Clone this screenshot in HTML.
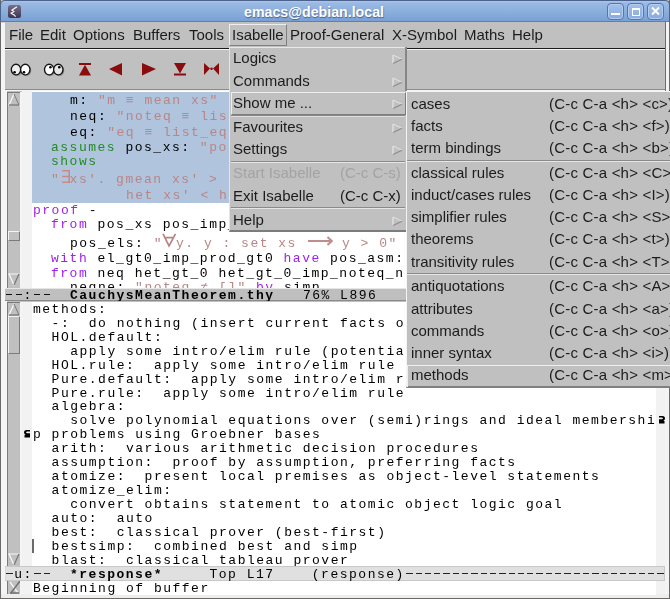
<!DOCTYPE html><html><head><meta charset="utf-8"><style>
html,body{margin:0;padding:0;width:670px;height:599px;overflow:hidden;background:#c0c0c0}
div{position:absolute;box-sizing:border-box}
.m{will-change:transform;font-family:"Liberation Mono",monospace;font-size:13px;line-height:14px;letter-spacing:1.5px;white-space:pre;color:#000}
.s{will-change:transform;font-family:"Liberation Sans",sans-serif;font-size:15px;line-height:22px;white-space:pre;color:#000}
</style></head><body>
<div style="left:0px;top:0px;width:670px;height:599px;background:#c0c0c0;"></div>
<div style="left:0px;top:0px;width:1px;height:599px;background:#6a6a6a;"></div>
<div style="left:669px;top:0px;width:1px;height:599px;background:#6a6a6a;"></div>
<div style="left:0px;top:598px;width:670px;height:1px;background:#6c6864;"></div>
<div style="left:1px;top:22px;width:4px;height:575px;background:#f4f4f4;"></div>
<div style="left:1px;top:22px;width:668px;height:1px;background:#d6d3cf;"></div>
<div style="left:665px;top:22px;width:4px;height:575px;background:#f4f4f4;"></div>
<div style="left:1px;top:594px;width:668px;height:4px;background:#ededed;"></div>
<div style="left:0;top:0;width:670px;height:22px;background:linear-gradient(#abc7ed 0px,#9bb9e4 2px,#8aaedc 11px,#7aa0d5 20px);border:1px solid #4b628a;border-bottom:1px solid #5880bb;border-radius:5px 5px 0 0"></div>
<div style="left:7.5px;top:5px;width:13px;height:12.5px;border-radius:2.5px;background:linear-gradient(#7a6f8c,#3d3450)"></div>
<svg style="position:absolute;left:7px;top:5px" width="13" height="13"><polyline points="9.6,2 4.8,5.2 7,6.6 4,8.3 7.6,10.2 8.2,11.3" fill="none" stroke="#fff" stroke-width="1.15" stroke-linejoin="round" stroke-linecap="round"/></svg>
<div style="left:236px;top:1.5px;width:160px;height:20px;font-family:'Liberation Sans';font-weight:bold;font-size:14.2px;line-height:20px;color:#fff;text-align:left;white-space:pre;padding-left:8px;text-shadow:0.5px 0.5px 1px rgba(30,50,90,0.6)">emacs@debian.local</div>
<div style="left:607px;top:3px;width:17px;height:17px;border-radius:4px;border:1px solid #4f76b2;background:linear-gradient(#a3c0ea,#88abdd);box-shadow:inset 0 0 0 1px #b3cdf0"></div>
<div style="left:627px;top:3px;width:17px;height:17px;border-radius:4px;border:1px solid #4f76b2;background:linear-gradient(#a3c0ea,#88abdd);box-shadow:inset 0 0 0 1px #b3cdf0"></div>
<div style="left:647px;top:3px;width:17px;height:17px;border-radius:4px;border:1px solid #4f76b2;background:linear-gradient(#a3c0ea,#88abdd);box-shadow:inset 0 0 0 1px #b3cdf0"></div>
<div style="left:611px;top:13px;width:9px;height:2px;background:#fff"></div>
<div style="left:631.5px;top:7.5px;width:8.5px;height:8px;border:1.2px solid #fff;border-top-width:2px"></div>
<svg style="position:absolute;left:647px;top:3px" width="17" height="17"><path d="M5,4.5 L12,11.5 M12,4.5 L5,11.5" stroke="#fff" stroke-width="1.9"/></svg>
<div style="left:5px;top:22px;width:660px;height:26px;background:#c0c0c0;"></div>
<div style="left:5px;top:48px;width:660px;height:1px;background:#1a1a1a;"></div>
<div style="left:5px;top:49px;width:660px;height:1px;background:#f4f4f4;"></div>
<div style="left:665px;top:22px;width:1px;height:69px;background:#6e6e6e;"></div>
<div class="s" style="left:8.5px;top:24px;color:#1c1c1c;">File</div>
<div class="s" style="left:39.5px;top:24px;color:#1c1c1c;">Edit</div>
<div class="s" style="left:73px;top:24px;color:#1c1c1c;">Options</div>
<div class="s" style="left:132.5px;top:24px;color:#1c1c1c;">Buffers</div>
<div class="s" style="left:189px;top:24px;color:#1c1c1c;">Tools</div>
<div class="s" style="left:231.5px;top:24px;color:#1c1c1c;">Isabelle</div>
<div class="s" style="left:290px;top:24px;color:#1c1c1c;">Proof-General</div>
<div class="s" style="left:392px;top:24px;color:#1c1c1c;">X-Symbol</div>
<div class="s" style="left:464px;top:24px;color:#1c1c1c;">Maths</div>
<div class="s" style="left:512px;top:24px;color:#1c1c1c;">Help</div>
<div style="left:229px;top:24px;width:58px;height:22px;border-top:1px solid #eeeeee;border-left:1px solid #eeeeee;border-right:1px solid #808080;border-bottom:1px solid #808080"></div>
<div style="left:5px;top:50px;width:660px;height:39px;background:#c0c0c0;"></div>
<div style="left:5px;top:89px;width:660px;height:1px;background:#8c8c8c;"></div>
<div style="left:5px;top:90px;width:660px;height:1px;background:#f4f4f4;"></div>
<svg style="position:absolute;left:9px;top:63px" width="26" height="16"><ellipse cx="8" cy="7.6" rx="5" ry="5.6" fill="#5a5a5a" opacity="0.45"/><ellipse cx="17.3" cy="7.6" rx="5" ry="5.6" fill="#5a5a5a" opacity="0.45"/><ellipse cx="7" cy="6.6" rx="4.7" ry="5.3" fill="#f0f0f0" stroke="#151515" stroke-width="1.4"/><circle cx="5.6" cy="9.2" r="1.3" fill="#000"/><ellipse cx="16.3" cy="6.6" rx="4.7" ry="5.3" fill="#ffffff" stroke="#151515" stroke-width="1.4"/><circle cx="15" cy="9.2" r="1.3" fill="#000"/></svg>
<svg style="position:absolute;left:42px;top:63px" width="26" height="16"><ellipse cx="8.2" cy="7.6" rx="5" ry="5.6" fill="#5a5a5a" opacity="0.45"/><ellipse cx="17.3" cy="7.6" rx="5" ry="5.6" fill="#5a5a5a" opacity="0.45"/><ellipse cx="7.2" cy="6.6" rx="4.7" ry="5.3" fill="#ffffff" stroke="#151515" stroke-width="1.4"/><circle cx="8.4" cy="4.2" r="1.3" fill="#000"/><ellipse cx="16.3" cy="6.6" rx="4.7" ry="5.3" fill="#e6e6e6" stroke="#151515" stroke-width="1.4"/><circle cx="17.3" cy="4.2" r="1.3" fill="#000"/></svg>
<svg style="position:absolute;left:78px;top:62px" width="15" height="15"><rect x="1" y="1" width="12" height="2" fill="#8b0c0c"/><polygon points="7,2.8 13,13.5 1,13.5" fill="#8b0c0c"/></svg>
<svg style="position:absolute;left:108px;top:62px" width="15" height="15"><polygon points="1,7 14,1 14,13.5" fill="#8b0c0c"/></svg>
<svg style="position:absolute;left:141px;top:62px" width="16" height="15"><polygon points="1,1 15,7 1,13.5" fill="#8b0c0c"/></svg>
<svg style="position:absolute;left:173px;top:62px" width="15" height="15"><polygon points="1,1 13,1 7,11.5" fill="#8b0c0c"/><rect x="1" y="11.5" width="12" height="2" fill="#8b0c0c"/></svg>
<svg style="position:absolute;left:203px;top:62px" width="17" height="15"><polygon points="1,1 7,6.5 1,13" fill="#8b0c0c"/><polygon points="16,1 10,6.5 16,13" fill="#8b0c0c"/><circle cx="8.5" cy="6.7" r="1.3" fill="#8b0c0c"/></svg>
<div style="left:5px;top:91px;width:2px;height:197px;background:#f4f4f4;"></div>
<div style="left:7px;top:92px;width:14px;height:196px;background:#c0c0c0;border-left:1px solid #7a7a7a;border-top:1px solid #7a7a7a"></div>
<div style="left:20px;top:92px;width:2px;height:196px;background:#f4f4f4;"></div>
<div style="left:22px;top:91px;width:10px;height:197px;background:#f2f2f2;"></div>
<div style="left:32px;top:91px;width:624px;height:197px;background:#ffffff;"></div>
<div style="left:656px;top:91px;width:9px;height:197px;background:#f2f2f2;"></div>
<div style="left:32px;top:92px;width:624px;height:111px;background:#b0c4de;"></div>
<div class="m" style="left:69.9px;top:94px;"><span style="color:#000">m: </span><span style="color:#b98585">"m ≡ mean xs" </span><span style="color:#228b22">and</span></div>
<div class="m" style="left:69.9px;top:110px;"><span style="color:#000">neq: </span><span style="color:#b98585">"noteq ≡ list</span></div>
<div class="m" style="left:69.9px;top:126px;"><span style="color:#000">eq: </span><span style="color:#b98585">"eq ≡ list_eq</span></div>
<div class="m" style="left:51.300000000000004px;top:141px;"><span style="color:#228b22">assumes </span><span style="color:#000">pos_xs: </span><span style="color:#b98585">"pos</span></div>
<div class="m" style="left:51.300000000000004px;top:155px;"><span style="color:#228b22">shows</span></div>
<div class="m" style="left:51.300000000000004px;top:173px;"><span style="color:#b98585">" xs'. gmean xs' &gt; </span></div>
<svg style="position:absolute;left:61px;top:169px" width="10" height="15"><path d="M1.2,1.7 H8.2 V13.3 H1.2 M1.2,7.5 H8.2" fill="none" stroke="#c88a84" stroke-width="1.6"/></svg>
<div class="m" style="left:125.7px;top:189px;"><span style="color:#b98585">het xs' &lt; het</span></div>
<div class="m" style="left:32.7px;top:204px;"><span style="color:#a020f0">proof</span><span style="color:#000"> -</span></div>
<div class="m" style="left:51.300000000000004px;top:218px;"><span style="color:#a020f0">from</span><span style="color:#000"> pos_xs pos_imp_</span></div>
<div class="m" style="left:69.9px;top:237px;"><span style="color:#000">pos_els: </span><span style="color:#b98585">"</span></div>
<svg style="position:absolute;left:161px;top:231.5px" width="16" height="16"><path d="M2,1.8 L8,14 L14.5,1.8 M4.2,5.6 H12.3" fill="none" stroke="#b98484" stroke-width="1.7"/></svg>
<div class="m" style="left:176.3px;top:237px;"><span style="color:#b98585">y. y : set xs </span></div>
<svg style="position:absolute;left:306px;top:234.5px" width="28" height="12"><path d="M2,6 H25.5 M21.5,2 L25.8,6 L21.5,10" fill="none" stroke="#c08c8c" stroke-width="2"/></svg>
<div class="m" style="left:342.3px;top:237px;"><span style="color:#b98585">y &gt; 0"</span></div>
<div class="m" style="left:51.300000000000004px;top:252px;"><span style="color:#a020f0">with</span><span style="color:#000"> el_gt0_imp_prod_gt0 </span><span style="color:#a020f0">have</span><span style="color:#000"> pos_asm:</span></div>
<div class="m" style="left:51.300000000000004px;top:267px;"><span style="color:#a020f0">from</span><span style="color:#000"> neq het_gt_0 het_gt_0_imp_noteq_n</span></div>
<div style="left:0;top:0;width:670px;height:288px;overflow:hidden">
<div class="m" style="left:69.9px;top:281px;"><span style="color:#000">negne: </span><span style="color:#b98585">"noteq ≠ []" </span><span style="color:#a020f0">by</span><span style="color:#000"> simp</span></div>
</div>
<svg style="position:absolute;left:8px;top:93px" width="12" height="13"><polygon points="6,1 11,12 1,12" fill="none" stroke="#f8f8f8" stroke-width="1.2"/><line x1="1" y1="12" x2="11" y2="12" stroke="#7a7a7a" stroke-width="1.5"/><line x1="6" y1="1" x2="11" y2="12" stroke="#7a7a7a" stroke-width="1.2"/></svg>
<div style="left:8px;top:231px;width:12px;height:10px;border-top:1px solid #f4f4f4;border-left:1px solid #f4f4f4;border-right:1px solid #7a7a7a;border-bottom:1px solid #7a7a7a;background:#c0c0c0"></div>
<svg style="position:absolute;left:8px;top:273px" width="12" height="13"><polygon points="1,1 11,1 6,12" fill="none" stroke="#f8f8f8" stroke-width="1.2"/><line x1="11" y1="1" x2="6" y2="12" stroke="#7a7a7a" stroke-width="1.5"/></svg>
<div style="left:5px;top:288px;width:660px;height:13px;background:#bfbfbf;border-top:1px solid #e6e6e6;border-bottom:1px solid #8a8a8a"></div>
<div style="left:0;top:0;width:670px;height:301px;overflow:hidden">
<div class="m" style="left:5px;top:289px;"><span style="color:#000">  :    </span></div>
<div style="left:6.3px;top:294px;width:6.2px;height:1.2px;background:#111;"></div>
<div style="left:15.600000000000001px;top:294px;width:6.2px;height:1.2px;background:#111;"></div>
<div style="left:34.2px;top:294px;width:6.2px;height:1.2px;background:#111;"></div>
<div style="left:43.5px;top:294px;width:6.2px;height:1.2px;background:#111;"></div>
<div class="m" style="left:70.10000000000001px;top:289px;font-weight:bold;"><span style="color:#000">CauchysMeanTheorem.thy</span></div>
<div class="m" style="left:274.70000000000005px;top:289px;"><span style="color:#000">   76% L896   (Isar script XS:isabelle/s)</span></div>
</div>
<div style="left:5px;top:301px;width:2px;height:265px;background:#f4f4f4;"></div>
<div style="left:7px;top:302px;width:14px;height:264px;background:#c0c0c0;border-left:1px solid #7a7a7a;border-top:1px solid #7a7a7a"></div>
<div style="left:20px;top:302px;width:2px;height:264px;background:#f4f4f4;"></div>
<div style="left:22px;top:302px;width:10px;height:264px;background:#f2f2f2;"></div>
<div style="left:32px;top:302px;width:624px;height:264px;background:#ffffff;"></div>
<div style="left:656px;top:302px;width:9px;height:264px;background:#f2f2f2;"></div>
<svg style="position:absolute;left:8px;top:303px" width="12" height="13"><polygon points="6,1 11,12 1,12" fill="none" stroke="#f8f8f8" stroke-width="1.2"/><line x1="1" y1="12" x2="11" y2="12" stroke="#7a7a7a" stroke-width="1.5"/><line x1="6" y1="1" x2="11" y2="12" stroke="#7a7a7a" stroke-width="1.2"/></svg>
<div style="left:8px;top:316px;width:12px;height:38px;border-top:1px solid #f4f4f4;border-left:1px solid #f4f4f4;border-right:1px solid #7a7a7a;border-bottom:1px solid #7a7a7a;background:#c0c0c0"></div>
<svg style="position:absolute;left:8px;top:553px" width="12" height="13"><polygon points="1,1 11,1 6,12" fill="none" stroke="#f8f8f8" stroke-width="1.2"/><line x1="11" y1="1" x2="6" y2="12" stroke="#7a7a7a" stroke-width="1.5"/></svg>
<div class="m" style="left:32.7px;top:303px;"><span style="color:#000">methods:</span></div>
<div class="m" style="left:32.7px;top:317px;"><span style="color:#000">  -:  do nothing (insert current facts only)</span></div>
<div class="m" style="left:32.7px;top:331px;"><span style="color:#000">  HOL.default:</span></div>
<div class="m" style="left:32.7px;top:345px;"><span style="color:#000">    apply some intro/elim rule (potentially classical)</span></div>
<div class="m" style="left:32.7px;top:359px;"><span style="color:#000">  HOL.rule:  apply some intro/elim rule (potentially classical)</span></div>
<div class="m" style="left:32.7px;top:373px;"><span style="color:#000">  Pure.default:  apply some intro/elim rule</span></div>
<div class="m" style="left:32.7px;top:387px;"><span style="color:#000">  Pure.rule:  apply some intro/elim rule</span></div>
<div class="m" style="left:32.7px;top:400px;"><span style="color:#000">  algebra:</span></div>
<div class="m" style="left:32.7px;top:414px;"><span style="color:#000">    solve polynomial equations over (semi)rings and ideal membershi</span></div>
<div class="m" style="left:32.7px;top:428px;"><span style="color:#000">p problems using Groebner bases</span></div>
<div class="m" style="left:32.7px;top:442px;"><span style="color:#000">  arith:  various arithmetic decision procedures</span></div>
<div class="m" style="left:32.7px;top:456px;"><span style="color:#000">  assumption:  proof by assumption, preferring facts</span></div>
<div class="m" style="left:32.7px;top:470px;"><span style="color:#000">  atomize:  present local premises as object-level statements</span></div>
<div class="m" style="left:32.7px;top:484px;"><span style="color:#000">  atomize_elim:</span></div>
<div class="m" style="left:32.7px;top:498px;"><span style="color:#000">    convert obtains statement to atomic object logic goal</span></div>
<div class="m" style="left:32.7px;top:512px;"><span style="color:#000">  auto:  auto</span></div>
<div class="m" style="left:32.7px;top:526px;"><span style="color:#000">  best:  classical prover (best-first)</span></div>
<div class="m" style="left:32.7px;top:540px;"><span style="color:#000">  bestsimp:  combined best and simp</span></div>
<div class="m" style="left:32.7px;top:554px;"><span style="color:#000">  blast:  classical tableau prover</span></div>
<svg style="position:absolute;left:658px;top:415px" width="8" height="9"><path d="M1,1 H4.5 Q7,1 7,3.5 Q7,5 5.5,5.5 L6.5,6 V8.5 H1 V4.3 H3.8 Q4.9,4.3 4.9,3.3 Q4.9,2.5 3.8,2.5 H1 Z" fill="#000"/></svg>
<svg style="position:absolute;left:23px;top:429px" width="8" height="9"><path d="M7,1 H3.5 Q1,1 1,3.5 Q1,5 2.5,5.5 L1.5,6 V8.5 H7 V4.3 H4.2 Q3.1,4.3 3.1,3.3 Q3.1,2.5 4.2,2.5 H7 Z" fill="#000"/></svg>
<div style="left:32px;top:539px;width:2px;height:13.5px;background:#6a6a6a;"></div>
<div style="left:5px;top:566px;width:660px;height:15px;background:#e0e0e0;border:1px solid #c8c8c8;border-left:1px solid #d8d8d8"></div>
<div class="m" style="left:5px;top:568px;"><span style="color:#000"> u:    </span></div>
<div style="left:6.3px;top:573px;width:6.4px;height:1.2px;background:#222;"></div>
<div style="left:34.2px;top:573px;width:6.4px;height:1.2px;background:#222;"></div>
<div style="left:43.5px;top:573px;width:6.4px;height:1.2px;background:#222;"></div>
<div style="left:406.20000000000005px;top:573px;width:6.4px;height:1.2px;background:#222;"></div>
<div style="left:415.50000000000006px;top:573px;width:6.4px;height:1.2px;background:#222;"></div>
<div style="left:424.80000000000007px;top:573px;width:6.4px;height:1.2px;background:#222;"></div>
<div style="left:434.1px;top:573px;width:6.4px;height:1.2px;background:#222;"></div>
<div style="left:443.40000000000003px;top:573px;width:6.4px;height:1.2px;background:#222;"></div>
<div style="left:452.70000000000005px;top:573px;width:6.4px;height:1.2px;background:#222;"></div>
<div style="left:462.00000000000006px;top:573px;width:6.4px;height:1.2px;background:#222;"></div>
<div style="left:471.30000000000007px;top:573px;width:6.4px;height:1.2px;background:#222;"></div>
<div style="left:480.6px;top:573px;width:6.4px;height:1.2px;background:#222;"></div>
<div style="left:489.90000000000003px;top:573px;width:6.4px;height:1.2px;background:#222;"></div>
<div style="left:499.20000000000005px;top:573px;width:6.4px;height:1.2px;background:#222;"></div>
<div style="left:508.50000000000006px;top:573px;width:6.4px;height:1.2px;background:#222;"></div>
<div style="left:517.8px;top:573px;width:6.4px;height:1.2px;background:#222;"></div>
<div style="left:527.1px;top:573px;width:6.4px;height:1.2px;background:#222;"></div>
<div style="left:536.4px;top:573px;width:6.4px;height:1.2px;background:#222;"></div>
<div style="left:545.7px;top:573px;width:6.4px;height:1.2px;background:#222;"></div>
<div style="left:555.0px;top:573px;width:6.4px;height:1.2px;background:#222;"></div>
<div style="left:564.3px;top:573px;width:6.4px;height:1.2px;background:#222;"></div>
<div style="left:573.6px;top:573px;width:6.4px;height:1.2px;background:#222;"></div>
<div style="left:582.9px;top:573px;width:6.4px;height:1.2px;background:#222;"></div>
<div style="left:592.2px;top:573px;width:6.4px;height:1.2px;background:#222;"></div>
<div style="left:601.5px;top:573px;width:6.4px;height:1.2px;background:#222;"></div>
<div style="left:610.8px;top:573px;width:6.4px;height:1.2px;background:#222;"></div>
<div style="left:620.1px;top:573px;width:6.4px;height:1.2px;background:#222;"></div>
<div style="left:629.4px;top:573px;width:6.4px;height:1.2px;background:#222;"></div>
<div style="left:638.7px;top:573px;width:6.4px;height:1.2px;background:#222;"></div>
<div style="left:648.0px;top:573px;width:6.4px;height:1.2px;background:#222;"></div>
<div style="left:657.3px;top:573px;width:6.4px;height:1.2px;background:#222;"></div>
<div class="m" style="left:70.10000000000001px;top:568px;font-weight:bold;"><span style="color:#000">*response*</span></div>
<div class="m" style="left:163.10000000000002px;top:568px;"><span style="color:#000">     Top L17    (response)</span></div>
<div style="left:5px;top:581px;width:2px;height:13px;background:#f4f4f4;"></div>
<div style="left:7px;top:581px;width:14px;height:13px;background:#c0c0c0;border-left:1px solid #7a7a7a"></div>
<div style="left:20px;top:581px;width:2px;height:13px;background:#f4f4f4;"></div>
<div style="left:22px;top:581px;width:10px;height:13px;background:#f2f2f2;"></div>
<div style="left:32px;top:581px;width:624px;height:14px;background:#ffffff;"></div>
<div style="left:656px;top:581px;width:9px;height:13px;background:#f2f2f2;"></div>
<svg style="position:absolute;left:8px;top:581px" width="12" height="13"><path d="M2,1 L10,12" stroke="#f4f4f4" stroke-width="1.3"/><path d="M12,0 L3,12" stroke="#707070" stroke-width="1.5"/><path d="M2,12 H11" stroke="#707070" stroke-width="1.5"/></svg>
<div class="m" style="left:32.7px;top:582px;"><span style="color:#000">Beginning of buffer</span></div>
<div style="left:229px;top:47px;width:177px;height:185px;background:#c0c0c0;border-top:1px solid #e8e8e8;border-left:1px solid #e4e4e4;border-bottom:2px solid #7c7c7c"></div>
<div style="left:405px;top:47px;width:1.5px;height:44px;background:#868686;"></div>
<div class="s" style="left:233px;top:47px;color:#1c1c1c;">Logics</div>
<svg style="position:absolute;left:391px;top:53.5px" width="13" height="11"><path d="M2,1 V9.5" stroke="#e6e6e6" stroke-width="1.2"/><path d="M2,1 L11,5.2" stroke="#dedede" stroke-width="1.1"/><path d="M2,9.5 L11,5.2" stroke="#8c8c8c" stroke-width="1.1"/></svg>
<div class="s" style="left:233px;top:70px;color:#1c1c1c;">Commands</div>
<svg style="position:absolute;left:391px;top:76.5px" width="13" height="11"><path d="M2,1 V9.5" stroke="#e6e6e6" stroke-width="1.2"/><path d="M2,1 L11,5.2" stroke="#dedede" stroke-width="1.1"/><path d="M2,9.5 L11,5.2" stroke="#8c8c8c" stroke-width="1.1"/></svg>
<div class="s" style="left:233px;top:92px;color:#1c1c1c;">Show me ...</div>
<svg style="position:absolute;left:391px;top:98.5px" width="13" height="11"><path d="M2,1 V9.5" stroke="#e6e6e6" stroke-width="1.2"/><path d="M2,1 L11,5.2" stroke="#dedede" stroke-width="1.1"/><path d="M2,9.5 L11,5.2" stroke="#8c8c8c" stroke-width="1.1"/></svg>
<div class="s" style="left:233px;top:116px;color:#1c1c1c;">Favourites</div>
<svg style="position:absolute;left:391px;top:122.5px" width="13" height="11"><path d="M2,1 V9.5" stroke="#e6e6e6" stroke-width="1.2"/><path d="M2,1 L11,5.2" stroke="#dedede" stroke-width="1.1"/><path d="M2,9.5 L11,5.2" stroke="#8c8c8c" stroke-width="1.1"/></svg>
<div class="s" style="left:233px;top:138px;color:#1c1c1c;">Settings</div>
<svg style="position:absolute;left:391px;top:144.5px" width="13" height="11"><path d="M2,1 V9.5" stroke="#e6e6e6" stroke-width="1.2"/><path d="M2,1 L11,5.2" stroke="#dedede" stroke-width="1.1"/><path d="M2,9.5 L11,5.2" stroke="#8c8c8c" stroke-width="1.1"/></svg>
<div class="s" style="left:233px;top:209px;color:#1c1c1c;">Help</div>
<svg style="position:absolute;left:391px;top:215.5px" width="13" height="11"><path d="M2,1 V9.5" stroke="#e6e6e6" stroke-width="1.2"/><path d="M2,1 L11,5.2" stroke="#dedede" stroke-width="1.1"/><path d="M2,9.5 L11,5.2" stroke="#8c8c8c" stroke-width="1.1"/></svg>
<div class="s" style="left:233px;top:162px;color:#a3a3a3;">Start Isabelle</div>
<div class="s" style="left:339.5px;top:162px;color:#a3a3a3;">(C-c C-s)</div>
<div class="s" style="left:233px;top:185px;color:#1c1c1c;">Exit Isabelle</div>
<div class="s" style="left:339.5px;top:185px;color:#1c1c1c;">(C-c C-x)</div>
<div style="left:231px;top:92px;width:175px;height:23px;border-top:1px solid #eeeeee;border-left:1px solid #eeeeee;border-right:1px solid #7c7c7c;border-bottom:1px solid #7c7c7c"></div>
<div style="left:231px;top:115px;width:174px;height:1px;background:#8a8a8a;"></div>
<div style="left:231px;top:116px;width:174px;height:1px;background:#dedede;"></div>
<div style="left:231px;top:161px;width:174px;height:1px;background:#8a8a8a;"></div>
<div style="left:231px;top:162px;width:174px;height:1px;background:#e6e6e6;"></div>
<div style="left:231px;top:207px;width:174px;height:1px;background:#8a8a8a;"></div>
<div style="left:231px;top:208px;width:174px;height:1px;background:#e6e6e6;"></div>
<div style="left:406px;top:91px;width:270px;height:297px;background:#c0c0c0;border-top:1px solid #f4f4f4;border-left:1px solid #f4f4f4;border-bottom:2px solid #808080"></div>
<div class="s" style="left:411px;top:93px;color:#1c1c1c;">cases</div>
<div class="s" style="left:549px;top:93px;color:#1c1c1c;letter-spacing:0.2px">(C-c C-a &lt;h&gt; &lt;c&gt;)</div>
<div class="s" style="left:411px;top:115px;color:#1c1c1c;">facts</div>
<div class="s" style="left:549px;top:115px;color:#1c1c1c;letter-spacing:0.2px">(C-c C-a &lt;h&gt; &lt;f&gt;)</div>
<div class="s" style="left:411px;top:137px;color:#1c1c1c;">term bindings</div>
<div class="s" style="left:549px;top:137px;color:#1c1c1c;letter-spacing:0.2px">(C-c C-a &lt;h&gt; &lt;b&gt;)</div>
<div class="s" style="left:411px;top:162px;color:#1c1c1c;">classical rules</div>
<div class="s" style="left:549px;top:162px;color:#1c1c1c;letter-spacing:0.2px">(C-c C-a &lt;h&gt; &lt;C&gt;)</div>
<div class="s" style="left:411px;top:184px;color:#1c1c1c;">induct/cases rules</div>
<div class="s" style="left:549px;top:184px;color:#1c1c1c;letter-spacing:0.2px">(C-c C-a &lt;h&gt; &lt;I&gt;)</div>
<div class="s" style="left:411px;top:206px;color:#1c1c1c;">simplifier rules</div>
<div class="s" style="left:549px;top:206px;color:#1c1c1c;letter-spacing:0.2px">(C-c C-a &lt;h&gt; &lt;S&gt;)</div>
<div class="s" style="left:411px;top:228px;color:#1c1c1c;">theorems</div>
<div class="s" style="left:549px;top:228px;color:#1c1c1c;letter-spacing:0.2px">(C-c C-a &lt;h&gt; &lt;t&gt;)</div>
<div class="s" style="left:411px;top:251px;color:#1c1c1c;">transitivity rules</div>
<div class="s" style="left:549px;top:251px;color:#1c1c1c;letter-spacing:0.2px">(C-c C-a &lt;h&gt; &lt;T&gt;)</div>
<div class="s" style="left:411px;top:275px;color:#1c1c1c;">antiquotations</div>
<div class="s" style="left:549px;top:275px;color:#1c1c1c;letter-spacing:0.2px">(C-c C-a &lt;h&gt; &lt;A&gt;)</div>
<div class="s" style="left:411px;top:298px;color:#1c1c1c;">attributes</div>
<div class="s" style="left:549px;top:298px;color:#1c1c1c;letter-spacing:0.2px">(C-c C-a &lt;h&gt; &lt;a&gt;)</div>
<div class="s" style="left:411px;top:320px;color:#1c1c1c;">commands</div>
<div class="s" style="left:549px;top:320px;color:#1c1c1c;letter-spacing:0.2px">(C-c C-a &lt;h&gt; &lt;o&gt;)</div>
<div class="s" style="left:411px;top:342px;color:#1c1c1c;">inner syntax</div>
<div class="s" style="left:549px;top:342px;color:#1c1c1c;letter-spacing:0.2px">(C-c C-a &lt;h&gt; &lt;i&gt;)</div>
<div class="s" style="left:411px;top:364px;color:#1c1c1c;">methods</div>
<div class="s" style="left:549px;top:364px;color:#1c1c1c;letter-spacing:0.2px">(C-c C-a &lt;h&gt; &lt;m&gt;)</div>
<div style="left:407px;top:160px;width:263px;height:1px;background:#8a8a8a;"></div>
<div style="left:407px;top:161px;width:263px;height:1px;background:#e6e6e6;"></div>
<div style="left:407px;top:273px;width:263px;height:1px;background:#8a8a8a;"></div>
<div style="left:407px;top:274px;width:263px;height:1px;background:#e6e6e6;"></div>
<div style="left:407px;top:365px;width:270px;height:22px;border-top:1px solid #eeeeee;border-left:1px solid #eeeeee"></div>
</body></html>
